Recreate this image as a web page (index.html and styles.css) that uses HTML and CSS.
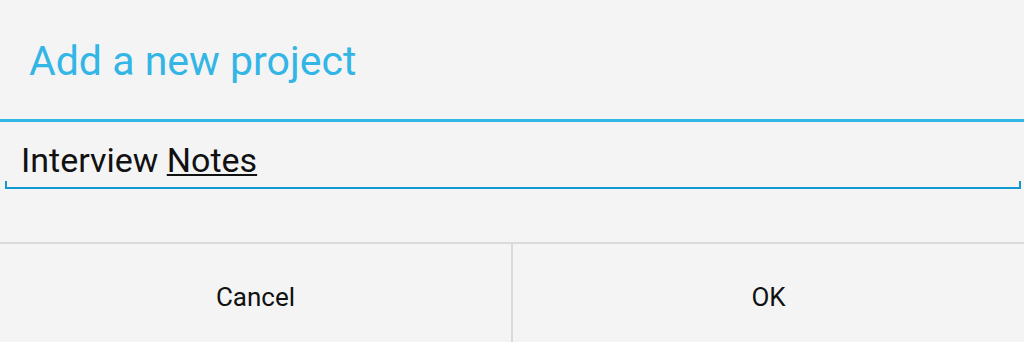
FILE: index.html
```html
<!DOCTYPE html>
<html>
<head>
<meta charset="utf-8">
<link rel="stylesheet" href="styles.css">
</head>
<body>
<div class="dialog">
  <div class="header"><h1 class="title">Add a new project</h1></div>
  <div class="rule"></div>
  <div class="body">
    <div class="field">
      <div class="value">Interview <span class="composing">Notes</span></div>
      <div class="underline"></div>
    </div>
  </div>
  <div class="buttons">
    <div class="btn">Cancel</div>
    <div class="sep"></div>
    <div class="btn">OK</div>
  </div>
</div>
</body>
</html>
```
FILE: styles.css
```css
html, body {
  margin: 0;
  padding: 0;
  background: #f4f4f4;
}
.dialog {
  width: 1024px;
  height: 342px;
  display: flex;
  flex-direction: column;
  font-family: Roboto, "Liberation Sans", sans-serif;
  overflow: hidden;
}
.header {
  height: 119px;
  display: flex;
  align-items: center;
  padding-left: 29px;
  padding-top: 3px;
  box-sizing: border-box;
}
.title {
  margin: 0;
  font-weight: 400;
  font-size: 41px;
  color: #33b5e5;
  line-height: 1;
}
.rule {
  height: 3px;
  background: #33b5e5;
}
.body {
  height: 120px;
  padding: 0 3px 0 5px;
  box-sizing: border-box;
}
.field {
  padding-top: 18px;
}
.value {
  font-size: 34px;
  color: #111;
  padding-left: 16px;
  line-height: 40px;
  height: 40px;
}
.composing {
  text-decoration: underline;
  text-decoration-thickness: 2px;
  text-underline-offset: 2px;
}
.underline {
  height: 6px;
  border: 2px solid #1399d2;
  border-top: none;
  margin-top: 1px;
}
.buttons {
  flex: 1;
  display: flex;
  border-top: 2px solid #dadada;
}
.btn {
  flex: 1;
  display: flex;
  align-items: center;
  justify-content: center;
  font-size: 26px;
  color: #111;
  padding-top: 7px;
}
.sep {
  width: 2px;
  background: #dadada;
}
```
